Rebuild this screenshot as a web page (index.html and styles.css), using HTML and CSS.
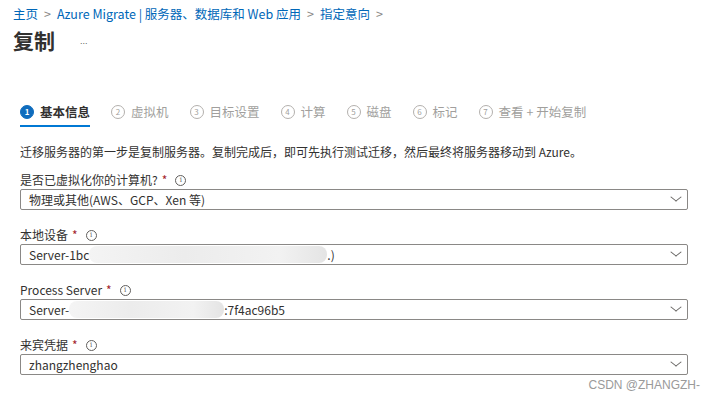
FILE: index.html
```html
<!DOCTYPE html>
<html lang="zh-CN">
<head>
    <meta charset="UTF-8">
    <title>复制</title>
    <link rel="stylesheet" href="styles.css">
</head>
<body>

    <!-- 面包屑 + 标题 -->
    <div class="header">
        <div class="crumbs">
            <a>主页</a><span class="sep">&gt;</span>
            <a>Azure Migrate | 服务器、数据库和 Web 应用</a><span class="sep">&gt;</span>
            <a>指定意向</a><span class="sep">&gt;</span>
        </div>
        <div class="title-row">
            <h1>复制</h1>
            <span class="more">...</span>
        </div>
    </div>

    <div class="content">
        <!-- 步骤 -->
        <div class="steps">
            <div class="step active"><span class="num">1</span>基本信息</div>
            <div class="step"><span class="num">2</span>虚拟机</div>
            <div class="step"><span class="num">3</span>目标设置</div>
            <div class="step"><span class="num">4</span>计算</div>
            <div class="step"><span class="num">5</span>磁盘</div>
            <div class="step"><span class="num">6</span>标记</div>
            <div class="step"><span class="num">7</span>查看 + 开始复制</div>
        </div>

        <p class="intro">迁移服务器的第一步是复制服务器。复制完成后，即可先执行测试迁移，然后最终将服务器移动到 Azure。</p>

        <div class="field">
            <label>是否已虚拟化你的计算机? <span class="req">*</span> <span class="info">i</span></label>
            <div class="select"><span>物理或其他(AWS、GCP、Xen 等)</span><span class="chev"></span></div>
        </div>

        <div class="field">
            <label>本地设备 <span class="req">*</span> <span class="info">i</span></label>
            <div class="select"><span>Server-1bc<span class="blur blur-a"></span>.)</span><span class="chev"></span></div>
        </div>

        <div class="field">
            <label>Process Server <span class="req">*</span> <span class="info">i</span></label>
            <div class="select"><span>Server-<span class="blur blur-b"></span>:7f4ac96b5</span><span class="chev"></span></div>
        </div>

        <div class="field">
            <label>来宾凭据 <span class="req">*</span> <span class="info">i</span></label>
            <div class="select"><span>zhangzhenghao</span><span class="chev"></span></div>
        </div>
    </div>

    <div class="watermark">CSDN @ZHANGZH-</div>

</body>
</html>
```

FILE: styles.css
```css
/* 页面 */
body {
    margin: 0;
    font-family: "Noto Sans CJK SC", "Open Sans", sans-serif;
    font-size: 12px;
    color: #323130;
    background: #fff;
    width: 715px;
    height: 398px;
    overflow: hidden;
    position: relative;
}

.header {
    padding: 5px 13px 0;
}

.crumbs {
    color: #0067b8;
    font-size: 12.5px;
    line-height: 18px;
    display: flex;
    gap: 5px;
}

.crumbs .sep {
    color: #8a8886;
    margin: 0 1px;
}

.title-row {
    display: flex;
    align-items: center;
    gap: 25px;
    margin-top: 2px;
}

.title-row h1 {
    margin: 0;
    font-size: 21px;
    font-weight: 700;
    line-height: 30px;
}

.more {
    color: #605e5c;
    font-family: "Liberation Sans", sans-serif;
    font-size: 9px;
    margin-top: 1px;
}

.content {
    padding: 0 27px 0 20px;
    margin-top: 44px;
}

.steps {
    display: flex;
    gap: 21px;
    height: 32px;
}

.step {
    display: flex;
    align-items: flex-start;
    color: #a19f9d;
    font-size: 12.5px;
    line-height: 20px;
    padding-top: 3px;
}

.step .num {
    width: 12px;
    height: 12px;
    border: 1px solid #b3b0ad;
    border-radius: 50%;
    font-size: 8px;
    line-height: 12px;
    text-align: center;
    margin: 3px 6px 0 0;
}

.step.active {
    color: #323130;
    font-weight: 700;
    border-bottom: 2px solid #0078d4;
    height: 28px;
    box-sizing: border-box;
}

.step.active .num {
    background: #0f6cbd;
    border-color: #0f6cbd;
    color: #fff;
    font-weight: 700;
}

.intro {
    margin: 13px 0 12px;
    line-height: 16px;
}

.field {
    margin-bottom: 17px;
}

.field label {
    display: flex;
    align-items: center;
    line-height: 16px;
    margin-bottom: 1px;
}

.req {
    color: #a4262c;
    margin: 0 8px 0 4px;
}

.info {
    width: 9px;
    height: 9px;
    border: 1px solid #605e5c;
    border-radius: 50%;
    font-size: 7px;
    line-height: 9px;
    text-align: center;
    color: #605e5c;
    font-family: "DejaVu Serif", serif;
}

.select {
    height: 21px;
    border: 1px solid #8a8886;
    border-radius: 2px;
    box-sizing: border-box;
    display: flex;
    align-items: center;
    justify-content: space-between;
    padding: 0 7px 0 8px;
}

.select > span:first-child {
    display: flex;
    align-items: center;
}

.chev {
    width: 7px;
    height: 7px;
    border-right: 1px solid #605e5c;
    border-bottom: 1px solid #605e5c;
    transform: scaleY(0.8) rotate(45deg);
    margin: -5px 0 0;
}

.blur {
    display: inline-block;
    height: 17px;
    border-radius: 8px;
    background: linear-gradient(90deg, #f4f4f4, #ececec 40%, #f2f2f2 80%, #e4e4e4);
}

.blur-a {
    width: 238px;
}

.blur-b {
    width: 155px;
}

.watermark {
    position: absolute;
    right: 15px;
    bottom: 6px;
    color: #9a9a9a;
    font-family: "Liberation Sans", sans-serif;
    font-size: 12px;
}
```
